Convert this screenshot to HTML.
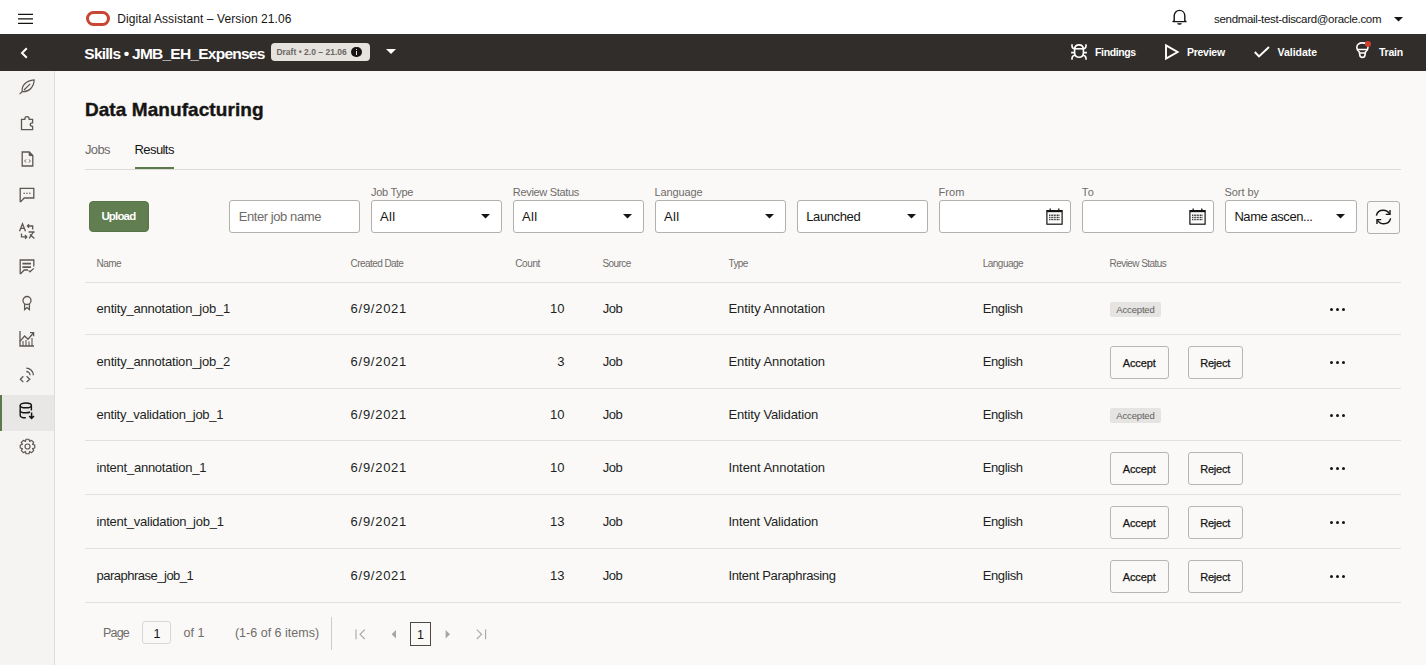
<!DOCTYPE html>
<html><head><meta charset="utf-8">
<style>
html,body{margin:0;padding:0;width:1426px;height:665px;overflow:hidden;background:#faf9f8;font-family:"Liberation Sans",sans-serif;}
.t{position:absolute;white-space:pre;line-height:1;font-family:"Liberation Sans",sans-serif;}
.a{position:absolute;}
svg{position:absolute;overflow:visible;}
</style></head><body>
<!-- top bar -->
<div class="a" style="left:0;top:0;width:1426px;height:34px;background:#ffffff"></div>
<!-- hamburger -->
<svg style="left:18px;top:12px" width="15" height="13" viewBox="0 0 15 13"><path d="M0 2.3 L15 2.3 M0 6.9 L15 6.9 M0 11.4 L15 11.4" stroke="#161513" stroke-width="1.3"/></svg>
<!-- oracle logo -->
<div class="a" style="left:85.5px;top:11px;width:18px;height:9px;border:3px solid #c74634;border-radius:8px;"></div>
<!-- bell -->
<svg style="left:1172px;top:9px" width="15" height="16" viewBox="0 0 15 16"><path d="M2.2 11.8 L2.2 6.8 C2.2 3.6 4.6 1.4 7.5 1.4 C10.4 1.4 12.8 3.6 12.8 6.8 L12.8 11.8 L14 12.6 L1 12.6 Z" fill="none" stroke="#161513" stroke-width="1.4" stroke-linejoin="round"/><path d="M5.6 14.3 C6.2 15.2 8.8 15.2 9.4 14.3" fill="none" stroke="#161513" stroke-width="1.3"/></svg>
<!-- email caret -->
<svg style="left:1394px;top:17px" width="9" height="5" viewBox="0 0 9 5"><path d="M0 0 L9 0 L4.5 4.5 Z" fill="#161513"/></svg>

<!-- dark bar -->
<div class="a" style="left:0;top:34px;width:1426px;height:37px;background:#312d2a"></div>
<svg style="left:20px;top:47px" width="9" height="12" viewBox="0 0 9 12"><path d="M6.8 1.2 L2 6 L6.8 10.8" fill="none" stroke="#ffffff" stroke-width="2"/></svg>
<div class="a" style="left:271px;top:43px;width:99px;height:18px;border-radius:4px;background:#e6e2dd"></div>
<div class="a" style="left:351.2px;top:46.9px;width:10.6px;height:10.6px;border-radius:50%;background:#161513"></div>
<div class="a" style="left:355.8px;top:48.6px;width:1.6px;height:1.6px;background:#e6e2dd"></div>
<div class="a" style="left:355.8px;top:51px;width:1.6px;height:4px;background:#e6e2dd"></div>
<svg style="left:386px;top:49px" width="10" height="5" viewBox="0 0 10 5"><path d="M0 0 L10 0 L5 5 Z" fill="#ffffff"/></svg>
<!-- findings bug -->
<svg style="left:1071px;top:44px" width="16" height="16" viewBox="0 0 16 16" fill="none" stroke="#ffffff" stroke-width="1.6">
<path d="M3.6 5.6 C3.6 2.2 5.6 0.9 8 0.9 C10.4 0.9 12.4 2.2 12.4 5.6 L12.4 8.8 C12.4 11.8 10.4 13.3 8 13.3 C5.6 13.3 3.6 11.8 3.6 8.8 Z"/>
<path d="M3.6 4.8 L12.4 4.8"/>
<path d="M0.1 8.6 L3.6 8.6 M12.4 8.6 L15.9 8.6"/>
<path d="M1 0.3 L1 2 C1 3.6 2 4.6 3.8 4.8 M15 0.3 L15 2 C15 3.6 14 4.6 12.2 4.8"/>
<path d="M1 15.7 L1 14.2 C1 12.6 2 11.6 3.9 11.2 M15 15.7 L15 14.2 C15 12.6 14 11.6 12.1 11.2"/>
</svg>
<!-- preview play -->
<svg style="left:1165px;top:44px" width="15" height="16" viewBox="0 0 15 16"><path d="M1 1.4 L12.6 8 L1 14.6 Z" fill="none" stroke="#ffffff" stroke-width="1.9" stroke-linejoin="miter"/></svg>
<!-- validate check -->
<svg style="left:1254px;top:46px" width="16" height="12" viewBox="0 0 16 12"><path d="M0.8 6 L5 10.4 L15 1" fill="none" stroke="#ffffff" stroke-width="2"/></svg>
<!-- train bulb -->
<svg style="left:1355px;top:42px" width="16" height="17" viewBox="0 0 16 17" fill="none" stroke="#ffffff" stroke-width="1.6" stroke-linejoin="round">
<path d="M4.4 10.2 C2.8 8.8 1.8 7.2 1.8 5.4 C1.8 2.6 4.2 0.9 7.4 0.9 C10.6 0.9 13 2.6 13 5.4 C13 7.2 12 8.8 10.4 10.2 L10 13.2 C9.8 14.8 8.8 15.4 7.4 15.4 C6 15.4 5 14.8 4.8 13.2 Z"/>
<path d="M2.4 7.5 L12.4 7.5 M4.6 11.1 L10.2 11.1" stroke-width="1.5"/>
</svg>
<div class="a" style="left:1365px;top:41px;width:6px;height:6px;border-radius:50%;background:#d0402c"></div>

<!-- sidebar -->
<div class="a" style="left:0;top:71px;width:54px;height:594px;background:#f5f4f2"></div>
<div class="a" style="left:54px;top:71px;width:1px;height:594px;background:#dfddda"></div>
<div class="a" style="left:0;top:395px;width:54px;height:36px;background:#e8e7e5"></div>
<div class="a" style="left:0;top:395px;width:2px;height:36px;background:#5b7a4b"></div>

<!-- sidebar icons -->
<svg style="left:19px;top:79px" width="16" height="16" viewBox="0 0 16 16" fill="none" stroke="#5c5753" stroke-width="1.2" stroke-linejoin="round">
<path d="M3.2 12.6 C2.4 6.6 7 1.6 15.2 0.8 C15 7.6 10.4 13.2 3.2 12.6 Z"/><path d="M5 11 L11.2 4.8"/><path d="M0.6 15.2 L3.4 12.4"/></svg>
<svg style="left:20px;top:115px" width="15" height="16" viewBox="0 0 15 16" fill="none" stroke="#5c5753" stroke-width="1.3">
<path d="M1.5 14.6 L1.5 4.4 L4.8 4.4 C4.8 2.6 5.6 1.6 7 1.6 C8.4 1.6 9.2 2.6 9.2 4.4 L12.6 4.4 L12.6 7.8 C11 7.8 10.2 8.4 10.2 9.6 C10.2 10.8 11 11.4 12.6 11.4 L12.6 14.6 Z"/></svg>
<svg style="left:21px;top:151px" width="13" height="16" viewBox="0 0 13 16" fill="none" stroke="#5c5753" stroke-width="1.3">
<path d="M1.2 1 L8.2 1 L11.8 4.6 L11.8 15 L1.2 15 Z"/><path d="M8.2 1 L11.8 4.6 L8.2 4.6 Z" fill="#5c5753" stroke-width="1"/><path d="M5 8.4 L3.6 10 L5 11.6 M8 8.4 L9.4 10 L8 11.6" stroke-width="0.9"/></svg>
<svg style="left:19px;top:187.3px" width="16" height="16" viewBox="0 0 16 16" fill="none" stroke="#5c5753" stroke-width="1.3">
<path d="M1.2 1.4 L14.8 1.4 L14.8 11 L5.2 11 L1.8 14.6 L1.2 14.6 Z"/><path d="M4.4 6.2 L6 6.2 M7.2 6.2 L8.8 6.2 M10 6.2 L11.6 6.2" stroke-width="1.1"/></svg>
<svg style="left:19px;top:222.5px" width="17" height="18" viewBox="0 0 17 18" fill="none" stroke="#5c5753" stroke-width="1.3">
<path d="M0.5 8.2 L3.5 0.8 L6.5 8.2 M1.6 5.4 L5.4 5.4"/><path d="M10 1.2 L8.4 3 L10 4.8 M8.5 3 L13.7 3 L13.7 6.6"/><path d="M2.5 10.4 L2.5 13.9 L7.8 13.9 M6 12 L7.8 13.9 L6 15.8"/><path d="M9.6 9 L15.6 9 M14.4 9 L10.2 15.4 M10.9 11.4 L15.4 15.4"/></svg>
<svg style="left:19px;top:259px" width="16" height="16" viewBox="0 0 16 16" fill="none" stroke="#5c5753" stroke-width="1.3">
<path d="M14.8 7.6 L14.8 1 L1.2 1 L1.2 14.6 L1.8 14.6 L5.2 11 L9 11"/><path d="M3.4 4.6 L12 4.6 M3.4 8.1 L12 8.1" stroke-width="1.8"/><path d="M9.6 11.4 L11 12.8 L14.8 9.4" stroke-width="1.2"/></svg>
<svg style="left:21px;top:295px" width="12" height="17" viewBox="0 0 12 17" fill="none" stroke="#5c5753" stroke-width="1.3">
<circle cx="6" cy="5.5" r="4"/><path d="M3.6 8.8 L3.6 14.6 L6 12.6 L8.4 14.6 L8.4 8.8"/></svg>
<svg style="left:19px;top:330px" width="16" height="17" viewBox="0 0 16 17" fill="none" stroke="#5c5753" stroke-width="1.3">
<path d="M1 1 L1 16 L15 16"/><path d="M1 11.4 L5.6 6 L9 9.2 L14.4 3"/><path d="M11 2.6 L14.6 2.6 L14.6 6.2"/><path d="M4 16 L4 11 M7 16 L7 10 M10 16 L10 11.4 M13 16 L13 8" stroke-width="1.1"/></svg>
<svg style="left:19px;top:367px" width="17" height="17" viewBox="0 0 17 17" fill="none" stroke="#5c5753" stroke-width="1.3">
<path d="M4.3 9.3 L1.4 12.2 L4.3 15.1 M7.6 9.3 L10.8 12.2 L7.6 15.1"/><path d="M7.3 1.2 A7.1 7.1 0 0 1 14.4 8.3"/><path d="M7.3 4.5 A3.8 3.8 0 0 1 11.1 8.3"/></svg>
<svg style="left:19px;top:402px" width="16" height="18" viewBox="0 0 16 18" fill="none" stroke="#161513" stroke-width="1.4">
<ellipse cx="6.8" cy="3.4" rx="5.6" ry="2.4"/><path d="M1.2 3.4 L1.2 13.4 C1.2 14.8 3.6 15.8 6.8 15.8 M12.4 3.4 L12.4 8.6"/><path d="M1.2 8.4 C1.2 9.8 3.6 10.8 6.8 10.8 C8.6 10.8 10 10.5 11 10"/><path d="M12.6 10.4 L12.6 16.4 M10.2 14 L12.6 16.4 L15 14" stroke-width="1.5"/></svg>
<svg style="left:18.5px;top:438px" width="17" height="17" viewBox="0 0 17 17" fill="none" stroke="#5c5753" stroke-width="1.2" stroke-linejoin="round">
<path d="M13.59 6.41 L15.75 7.03 L15.75 9.97 L13.59 10.59 L13.58 10.62 L14.67 12.59 L12.59 14.67 L10.62 13.58 L10.59 13.59 L9.97 15.75 L7.03 15.75 L6.41 13.59 L6.38 13.58 L4.41 14.67 L2.33 12.59 L3.42 10.62 L3.41 10.59 L1.25 9.97 L1.25 7.03 L3.41 6.41 L3.42 6.38 L2.33 4.41 L4.41 2.33 L6.38 3.42 L6.41 3.41 L7.03 1.25 L9.97 1.25 L10.59 3.41 L10.62 3.42 L12.59 2.33 L14.67 4.41 L13.58 6.38 Z"/>
<circle cx="8.5" cy="8.5" r="2.5"/></svg>

<!-- content -->
<div class="a" style="left:85px;top:169px;width:1316px;height:1px;background:#dcdad7"></div>
<div class="a" style="left:135px;top:167px;width:39px;height:2px;background:#5b7a4b"></div>
<!-- upload -->
<div class="a" style="left:89px;top:201px;width:58px;height:29px;border:1px solid #587549;border-radius:4px;background:#617e50"></div>
<!-- inputs -->
<div class="a" style="left:229px;top:200px;width:129px;height:31px;border:1px solid #b3b0ac;border-radius:3px;background:#ffffff"></div>
<div class="a" style="left:371px;top:200px;width:129px;height:31px;border:1px solid #b3b0ac;border-radius:3px;background:#ffffff"></div>
<div class="a" style="left:513px;top:200px;width:129px;height:31px;border:1px solid #b3b0ac;border-radius:3px;background:#ffffff"></div>
<div class="a" style="left:655px;top:200px;width:129px;height:31px;border:1px solid #b3b0ac;border-radius:3px;background:#ffffff"></div>
<div class="a" style="left:797px;top:200px;width:129px;height:31px;border:1px solid #b3b0ac;border-radius:3px;background:#ffffff"></div>
<div class="a" style="left:939px;top:200px;width:130px;height:31px;border:1px solid #b3b0ac;border-radius:3px;background:#ffffff"></div>
<div class="a" style="left:1082px;top:200px;width:130px;height:31px;border:1px solid #b3b0ac;border-radius:3px;background:#ffffff"></div>
<div class="a" style="left:1225px;top:200px;width:130px;height:31px;border:1px solid #b3b0ac;border-radius:3px;background:#ffffff"></div>
<div class="a" style="left:1367px;top:201px;width:31px;height:31px;border:1px solid #b3b0ac;border-radius:3px;background:#faf9f8"></div>
<!-- carets -->
<svg style="left:481px;top:213.5px" width="9" height="5" viewBox="0 0 9 5"><path d="M0 0 L9 0 L4.5 4.6 Z" fill="#161513"/></svg>
<svg style="left:623px;top:213.5px" width="9" height="5" viewBox="0 0 9 5"><path d="M0 0 L9 0 L4.5 4.6 Z" fill="#161513"/></svg>
<svg style="left:765px;top:213.5px" width="9" height="5" viewBox="0 0 9 5"><path d="M0 0 L9 0 L4.5 4.6 Z" fill="#161513"/></svg>
<svg style="left:907px;top:213.5px" width="9" height="5" viewBox="0 0 9 5"><path d="M0 0 L9 0 L4.5 4.6 Z" fill="#161513"/></svg>
<svg style="left:1336px;top:213.5px" width="9" height="5" viewBox="0 0 9 5"><path d="M0 0 L9 0 L4.5 4.6 Z" fill="#161513"/></svg>
<!-- calendars -->
<svg style="left:1046px;top:207.5px" width="17" height="17" viewBox="0 0 17 17" fill="none" stroke="#161513" stroke-width="1.2">
<rect x="0.9" y="2.6" width="15.2" height="13.6"/><path d="M0.9 3.4 L16.1 3.4" stroke-width="1.6"/><path d="M4.2 0.4 L4.2 3 M12.8 0.4 L12.8 3" stroke-width="1.3"/>
<path d="M3.2 7.3 L14 7.3 M3.2 9.4 L14 9.4 M3.2 11.5 L14 11.5" stroke-width="1.4" stroke-dasharray="0.9 0.65"/></svg>
<svg style="left:1189px;top:207.5px" width="17" height="17" viewBox="0 0 17 17" fill="none" stroke="#161513" stroke-width="1.2">
<rect x="0.9" y="2.6" width="15.2" height="13.6"/><path d="M0.9 3.4 L16.1 3.4" stroke-width="1.6"/><path d="M4.2 0.4 L4.2 3 M12.8 0.4 L12.8 3" stroke-width="1.3"/>
<path d="M3.2 7.3 L14 7.3 M3.2 9.4 L14 9.4 M3.2 11.5 L14 11.5" stroke-width="1.4" stroke-dasharray="0.9 0.65"/></svg>
<!-- refresh -->
<svg style="left:1375px;top:209px" width="17" height="16" viewBox="0 0 17 16" fill="none" stroke="#161513" stroke-width="1.4">
<path d="M1.4 6.6 C2 3.4 4.8 1.2 8.2 1.2 C11 1.2 13.4 2.8 14.6 5"/><path d="M15 1 L15 5.4 L10.8 5.4"/>
<path d="M15.6 9.4 C15 12.6 12.2 14.8 8.8 14.8 C6 14.8 3.6 13.2 2.4 11"/><path d="M2 15 L2 10.6 L6.2 10.6"/></svg>

<!-- table lines -->
<div class="a" style="left:85px;top:282px;width:1316px;height:1px;background:#e3e1de"></div>
<div class="a" style="left:85px;top:334px;width:1316px;height:1px;background:#e3e1de"></div>
<div class="a" style="left:85px;top:388px;width:1316px;height:1px;background:#e3e1de"></div>
<div class="a" style="left:85px;top:440px;width:1316px;height:1px;background:#e3e1de"></div>
<div class="a" style="left:85px;top:494px;width:1316px;height:1px;background:#e3e1de"></div>
<div class="a" style="left:85px;top:548px;width:1316px;height:1px;background:#e3e1de"></div>
<div class="a" style="left:85px;top:602px;width:1316px;height:1px;background:#e3e1de"></div>

<!-- pagination -->
<div class="a" style="left:142px;top:621px;width:27px;height:21px;border:1px solid #d9d7d4;border-radius:3px;background:#faf9f8"></div>
<div class="a" style="left:331px;top:617px;width:1px;height:33px;background:#cfccc8"></div>
<svg style="left:355px;top:629px" width="11" height="11" viewBox="0 0 11 11" fill="none" stroke="#a9a6a2" stroke-width="1.1"><path d="M1 0.4 L1 10.2 M9.8 0.6 L5 5.3 L9.8 10"/></svg>
<svg style="left:391px;top:630px" width="6" height="9" viewBox="0 0 6 9"><path d="M5 0 L5 8.4 L0.6 4.2 Z" fill="#a9a6a2"/></svg>
<div class="a" style="left:410px;top:622px;width:19px;height:22px;border:1.2px solid #4d4945;"></div>
<svg style="left:445px;top:630px" width="6" height="9" viewBox="0 0 6 9"><path d="M0.6 0 L0.6 8.4 L5 4.2 Z" fill="#a9a6a2"/></svg>
<svg style="left:476px;top:629px" width="11" height="11" viewBox="0 0 11 11" fill="none" stroke="#a9a6a2" stroke-width="1.1"><path d="M9.6 0.4 L9.6 10.2 M0.8 0.6 L5.6 5.3 L0.8 10"/></svg>

<div style="position:absolute;left:1330.0px;top:307.6px;width:3px;height:3px;border-radius:50%;background:#161513"></div>
<div style="position:absolute;left:1336.0px;top:307.6px;width:3px;height:3px;border-radius:50%;background:#161513"></div>
<div style="position:absolute;left:1342.0px;top:307.6px;width:3px;height:3px;border-radius:50%;background:#161513"></div>
<div style="position:absolute;left:1110px;top:301.5px;width:51px;height:15px;border-radius:2px;background:#e5e4e2"></div>
<div style="position:absolute;left:1330.0px;top:360.6px;width:3px;height:3px;border-radius:50%;background:#161513"></div>
<div style="position:absolute;left:1336.0px;top:360.6px;width:3px;height:3px;border-radius:50%;background:#161513"></div>
<div style="position:absolute;left:1342.0px;top:360.6px;width:3px;height:3px;border-radius:50%;background:#161513"></div>
<div style="position:absolute;left:1110px;top:346.0px;width:57px;height:31px;border:1px solid #b9b6b2;border-radius:3px;box-sizing:content-box"></div>
<div style="position:absolute;left:1188px;top:346.0px;width:53px;height:31px;border:1px solid #b9b6b2;border-radius:3px;box-sizing:content-box"></div>
<div style="position:absolute;left:1330.0px;top:413.6px;width:3px;height:3px;border-radius:50%;background:#161513"></div>
<div style="position:absolute;left:1336.0px;top:413.6px;width:3px;height:3px;border-radius:50%;background:#161513"></div>
<div style="position:absolute;left:1342.0px;top:413.6px;width:3px;height:3px;border-radius:50%;background:#161513"></div>
<div style="position:absolute;left:1110px;top:407.5px;width:51px;height:15px;border-radius:2px;background:#e5e4e2"></div>
<div style="position:absolute;left:1330.0px;top:466.6px;width:3px;height:3px;border-radius:50%;background:#161513"></div>
<div style="position:absolute;left:1336.0px;top:466.6px;width:3px;height:3px;border-radius:50%;background:#161513"></div>
<div style="position:absolute;left:1342.0px;top:466.6px;width:3px;height:3px;border-radius:50%;background:#161513"></div>
<div style="position:absolute;left:1110px;top:452.0px;width:57px;height:31px;border:1px solid #b9b6b2;border-radius:3px;box-sizing:content-box"></div>
<div style="position:absolute;left:1188px;top:452.0px;width:53px;height:31px;border:1px solid #b9b6b2;border-radius:3px;box-sizing:content-box"></div>
<div style="position:absolute;left:1330.0px;top:520.6px;width:3px;height:3px;border-radius:50%;background:#161513"></div>
<div style="position:absolute;left:1336.0px;top:520.6px;width:3px;height:3px;border-radius:50%;background:#161513"></div>
<div style="position:absolute;left:1342.0px;top:520.6px;width:3px;height:3px;border-radius:50%;background:#161513"></div>
<div style="position:absolute;left:1110px;top:506.0px;width:57px;height:31px;border:1px solid #b9b6b2;border-radius:3px;box-sizing:content-box"></div>
<div style="position:absolute;left:1188px;top:506.0px;width:53px;height:31px;border:1px solid #b9b6b2;border-radius:3px;box-sizing:content-box"></div>
<div style="position:absolute;left:1330.0px;top:574.6px;width:3px;height:3px;border-radius:50%;background:#161513"></div>
<div style="position:absolute;left:1336.0px;top:574.6px;width:3px;height:3px;border-radius:50%;background:#161513"></div>
<div style="position:absolute;left:1342.0px;top:574.6px;width:3px;height:3px;border-radius:50%;background:#161513"></div>
<div style="position:absolute;left:1110px;top:560.0px;width:57px;height:31px;border:1px solid #b9b6b2;border-radius:3px;box-sizing:content-box"></div>
<div style="position:absolute;left:1188px;top:560.0px;width:53px;height:31px;border:1px solid #b9b6b2;border-radius:3px;box-sizing:content-box"></div>
<span class="t" style="left:117.2px;top:12.64px;font-size:12px;font-weight:400;color:#161513;letter-spacing:0.089px;">Digital Assistant – Version 21.06</span>
<span class="t" style="left:1214.1000000000001px;top:13.67px;font-size:11.5px;font-weight:400;color:#161513;letter-spacing:-0.317px;">sendmail-test-discard@oracle.com</span>
<span class="t" style="left:84.30000000000001px;top:45.88px;font-size:15.5px;font-weight:700;color:#ffffff;letter-spacing:-0.757px;">Skills • JMB_EH_Expenses</span>
<span class="t" style="left:276.4px;top:47.80px;font-size:8.5px;font-weight:700;color:#6b6763;letter-spacing:0.018px;">Draft • 2.0 – 21.06</span>
<span class="t" style="left:1095.1000000000001px;top:47.21px;font-size:10.5px;font-weight:700;color:#ffffff;letter-spacing:-0.393px;">Findings</span>
<span class="t" style="left:1186.9px;top:47.21px;font-size:10.5px;font-weight:700;color:#ffffff;letter-spacing:-0.251px;">Preview</span>
<span class="t" style="left:1277.6000000000001px;top:47.21px;font-size:10.5px;font-weight:700;color:#ffffff;letter-spacing:-0.043px;">Validate</span>
<span class="t" style="left:1378.9px;top:47.21px;font-size:10.5px;font-weight:700;color:#ffffff;letter-spacing:-0.198px;">Train</span>
<span class="t" style="left:84.9px;top:100.32px;font-size:19px;font-weight:700;color:#161513;letter-spacing:0.079px;-webkit-text-stroke:0.4px #161513">Data Manufacturing</span>
<span class="t" style="left:84.9px;top:142.90px;font-size:13px;font-weight:400;color:#6f6c69;letter-spacing:-0.590px;">Jobs</span>
<span class="t" style="left:134.5px;top:142.90px;font-size:13px;font-weight:400;color:#161513;letter-spacing:-0.577px;">Results</span>
<span class="t" style="left:101.4px;top:210.67px;font-size:11.5px;font-weight:700;color:#ffffff;letter-spacing:-0.837px;">Upload</span>
<span class="t" style="left:238.70000000000002px;top:210.00px;font-size:13px;font-weight:400;color:#6f6c69;letter-spacing:-0.421px;">Enter job name</span>
<span class="t" style="left:371.0px;top:186.89px;font-size:11px;font-weight:400;color:#6f6c69;letter-spacing:-0.293px;">Job Type</span>
<span class="t" style="left:512.8px;top:186.89px;font-size:11px;font-weight:400;color:#6f6c69;letter-spacing:-0.326px;">Review Status</span>
<span class="t" style="left:654.6px;top:186.89px;font-size:11px;font-weight:400;color:#6f6c69;letter-spacing:-0.136px;">Language</span>
<span class="t" style="left:938.4px;top:186.89px;font-size:11px;font-weight:400;color:#6f6c69;letter-spacing:0.109px;">From</span>
<span class="t" style="left:1081.7px;top:186.89px;font-size:11px;font-weight:400;color:#6f6c69;letter-spacing:0.575px;">To</span>
<span class="t" style="left:1224.4px;top:186.89px;font-size:11px;font-weight:400;color:#6f6c69;letter-spacing:-0.027px;">Sort by</span>
<span class="t" style="left:380.0px;top:210.00px;font-size:13px;font-weight:400;color:#161513;letter-spacing:0.323px;">All</span>
<span class="t" style="left:522.0px;top:210.00px;font-size:13px;font-weight:400;color:#161513;letter-spacing:0.323px;">All</span>
<span class="t" style="left:664.0px;top:210.00px;font-size:13px;font-weight:400;color:#161513;letter-spacing:0.323px;">All</span>
<span class="t" style="left:806.1999999999999px;top:210.00px;font-size:13px;font-weight:400;color:#161513;letter-spacing:-0.375px;">Launched</span>
<span class="t" style="left:1234.4px;top:210.00px;font-size:13px;font-weight:400;color:#161513;letter-spacing:-0.436px;">Name ascen...</span>
<span class="t" style="left:96.60000000000001px;top:258.74px;font-size:10px;font-weight:400;color:#6f6c69;letter-spacing:-0.562px;">Name</span>
<span class="t" style="left:350.59999999999997px;top:258.74px;font-size:10px;font-weight:400;color:#6f6c69;letter-spacing:-0.562px;">Created Date</span>
<span class="t" style="left:515.3px;top:258.74px;font-size:10px;font-weight:400;color:#6f6c69;letter-spacing:-0.422px;">Count</span>
<span class="t" style="left:602.4px;top:258.74px;font-size:10px;font-weight:400;color:#6f6c69;letter-spacing:-0.577px;">Source</span>
<span class="t" style="left:728.6px;top:258.74px;font-size:10px;font-weight:400;color:#6f6c69;letter-spacing:-0.663px;">Type</span>
<span class="t" style="left:982.6999999999999px;top:258.74px;font-size:10px;font-weight:400;color:#6f6c69;letter-spacing:-0.500px;">Language</span>
<span class="t" style="left:1109.6000000000001px;top:258.74px;font-size:10px;font-weight:400;color:#6f6c69;letter-spacing:-0.568px;">Review Status</span>
<span class="t" style="left:96.60000000000001px;top:301.70px;font-size:13px;font-weight:400;color:#221f1d;letter-spacing:-0.203px;">entity_annotation_job_1</span>
<span class="t" style="left:350.59999999999997px;top:301.70px;font-size:13px;font-weight:400;color:#221f1d;letter-spacing:0.727px;">6/9/2021</span>
<span class="t" style="right:861.37px;top:301.70px;font-size:13px;font-weight:400;color:#221f1d;letter-spacing:0.131px;">10</span>
<span class="t" style="left:602.6999999999999px;top:301.70px;font-size:13px;font-weight:400;color:#221f1d;letter-spacing:-0.484px;">Job</span>
<span class="t" style="left:728.4px;top:301.70px;font-size:13px;font-weight:400;color:#221f1d;letter-spacing:-0.055px;">Entity Annotation</span>
<span class="t" style="left:982.6999999999999px;top:301.70px;font-size:13px;font-weight:400;color:#221f1d;letter-spacing:-0.390px;">English</span>
<span class="t" style="left:1116.3000000000002px;top:304.96px;font-size:9.5px;font-weight:400;color:#615e5a;letter-spacing:-0.161px;">Accepted</span>
<span class="t" style="left:96.60000000000001px;top:354.70px;font-size:13px;font-weight:400;color:#221f1d;letter-spacing:-0.203px;">entity_annotation_job_2</span>
<span class="t" style="left:350.59999999999997px;top:354.70px;font-size:13px;font-weight:400;color:#221f1d;letter-spacing:0.727px;">6/9/2021</span>
<span class="t" style="right:861.50px;top:354.70px;font-size:13px;font-weight:400;color:#221f1d;letter-spacing:0.000px;">3</span>
<span class="t" style="left:602.6999999999999px;top:354.70px;font-size:13px;font-weight:400;color:#221f1d;letter-spacing:-0.484px;">Job</span>
<span class="t" style="left:728.4px;top:354.70px;font-size:13px;font-weight:400;color:#221f1d;letter-spacing:-0.055px;">Entity Annotation</span>
<span class="t" style="left:982.6999999999999px;top:354.70px;font-size:13px;font-weight:400;color:#221f1d;letter-spacing:-0.390px;">English</span>
<span class="t" style="left:1122.7px;top:357.89px;font-size:11px;font-weight:400;color:#161513;letter-spacing:-0.088px;-webkit-text-stroke:0.25px #161513">Accept</span>
<span class="t" style="left:1200.2px;top:357.89px;font-size:11px;font-weight:400;color:#161513;letter-spacing:-0.198px;-webkit-text-stroke:0.25px #161513">Reject</span>
<span class="t" style="left:96.60000000000001px;top:407.70px;font-size:13px;font-weight:400;color:#221f1d;letter-spacing:-0.240px;">entity_validation_job_1</span>
<span class="t" style="left:350.59999999999997px;top:407.70px;font-size:13px;font-weight:400;color:#221f1d;letter-spacing:0.727px;">6/9/2021</span>
<span class="t" style="right:861.37px;top:407.70px;font-size:13px;font-weight:400;color:#221f1d;letter-spacing:0.131px;">10</span>
<span class="t" style="left:602.6999999999999px;top:407.70px;font-size:13px;font-weight:400;color:#221f1d;letter-spacing:-0.484px;">Job</span>
<span class="t" style="left:728.4px;top:407.70px;font-size:13px;font-weight:400;color:#221f1d;letter-spacing:-0.148px;">Entity Validation</span>
<span class="t" style="left:982.6999999999999px;top:407.70px;font-size:13px;font-weight:400;color:#221f1d;letter-spacing:-0.390px;">English</span>
<span class="t" style="left:1116.3000000000002px;top:410.96px;font-size:9.5px;font-weight:400;color:#615e5a;letter-spacing:-0.161px;">Accepted</span>
<span class="t" style="left:96.60000000000001px;top:460.70px;font-size:13px;font-weight:400;color:#221f1d;letter-spacing:-0.245px;">intent_annotation_1</span>
<span class="t" style="left:350.59999999999997px;top:460.70px;font-size:13px;font-weight:400;color:#221f1d;letter-spacing:0.727px;">6/9/2021</span>
<span class="t" style="right:861.37px;top:460.70px;font-size:13px;font-weight:400;color:#221f1d;letter-spacing:0.131px;">10</span>
<span class="t" style="left:602.6999999999999px;top:460.70px;font-size:13px;font-weight:400;color:#221f1d;letter-spacing:-0.484px;">Job</span>
<span class="t" style="left:728.4px;top:460.70px;font-size:13px;font-weight:400;color:#221f1d;letter-spacing:-0.056px;">Intent Annotation</span>
<span class="t" style="left:982.6999999999999px;top:460.70px;font-size:13px;font-weight:400;color:#221f1d;letter-spacing:-0.390px;">English</span>
<span class="t" style="left:1122.7px;top:463.89px;font-size:11px;font-weight:400;color:#161513;letter-spacing:-0.088px;-webkit-text-stroke:0.25px #161513">Accept</span>
<span class="t" style="left:1200.2px;top:463.89px;font-size:11px;font-weight:400;color:#161513;letter-spacing:-0.198px;-webkit-text-stroke:0.25px #161513">Reject</span>
<span class="t" style="left:96.60000000000001px;top:514.70px;font-size:13px;font-weight:400;color:#221f1d;letter-spacing:-0.259px;">intent_validation_job_1</span>
<span class="t" style="left:350.59999999999997px;top:514.70px;font-size:13px;font-weight:400;color:#221f1d;letter-spacing:0.727px;">6/9/2021</span>
<span class="t" style="right:861.37px;top:514.70px;font-size:13px;font-weight:400;color:#221f1d;letter-spacing:0.131px;">13</span>
<span class="t" style="left:602.6999999999999px;top:514.70px;font-size:13px;font-weight:400;color:#221f1d;letter-spacing:-0.484px;">Job</span>
<span class="t" style="left:728.4px;top:514.70px;font-size:13px;font-weight:400;color:#221f1d;letter-spacing:-0.149px;">Intent Validation</span>
<span class="t" style="left:982.6999999999999px;top:514.70px;font-size:13px;font-weight:400;color:#221f1d;letter-spacing:-0.390px;">English</span>
<span class="t" style="left:1122.7px;top:517.89px;font-size:11px;font-weight:400;color:#161513;letter-spacing:-0.088px;-webkit-text-stroke:0.25px #161513">Accept</span>
<span class="t" style="left:1200.2px;top:517.89px;font-size:11px;font-weight:400;color:#161513;letter-spacing:-0.198px;-webkit-text-stroke:0.25px #161513">Reject</span>
<span class="t" style="left:96.60000000000001px;top:568.70px;font-size:13px;font-weight:400;color:#221f1d;letter-spacing:-0.507px;">paraphrase_job_1</span>
<span class="t" style="left:350.59999999999997px;top:568.70px;font-size:13px;font-weight:400;color:#221f1d;letter-spacing:0.727px;">6/9/2021</span>
<span class="t" style="right:861.37px;top:568.70px;font-size:13px;font-weight:400;color:#221f1d;letter-spacing:0.131px;">13</span>
<span class="t" style="left:602.6999999999999px;top:568.70px;font-size:13px;font-weight:400;color:#221f1d;letter-spacing:-0.484px;">Job</span>
<span class="t" style="left:728.4px;top:568.70px;font-size:13px;font-weight:400;color:#221f1d;letter-spacing:-0.332px;">Intent Paraphrasing</span>
<span class="t" style="left:982.6999999999999px;top:568.70px;font-size:13px;font-weight:400;color:#221f1d;letter-spacing:-0.390px;">English</span>
<span class="t" style="left:1122.7px;top:571.89px;font-size:11px;font-weight:400;color:#161513;letter-spacing:-0.088px;-webkit-text-stroke:0.25px #161513">Accept</span>
<span class="t" style="left:1200.2px;top:571.89px;font-size:11px;font-weight:400;color:#161513;letter-spacing:-0.198px;-webkit-text-stroke:0.25px #161513">Reject</span>
<span class="t" style="left:102.9px;top:627.22px;font-size:12.5px;font-weight:400;color:#6f6c69;letter-spacing:-0.768px;">Page</span>
<span class="t" style="left:153.4px;top:627.62px;font-size:12.5px;font-weight:400;color:#161513;letter-spacing:0.000px;">1</span>
<span class="t" style="left:183.5px;top:627.02px;font-size:12.5px;font-weight:400;color:#6f6c69;letter-spacing:0.014px;">of 1</span>
<span class="t" style="left:234.9px;top:627.02px;font-size:12.5px;font-weight:400;color:#6f6c69;letter-spacing:0.016px;">(1-6 of 6 items)</span>
<span class="t" style="left:416.9px;top:628.62px;font-size:12.5px;font-weight:400;color:#161513;letter-spacing:0.000px;">1</span>
</body></html>
